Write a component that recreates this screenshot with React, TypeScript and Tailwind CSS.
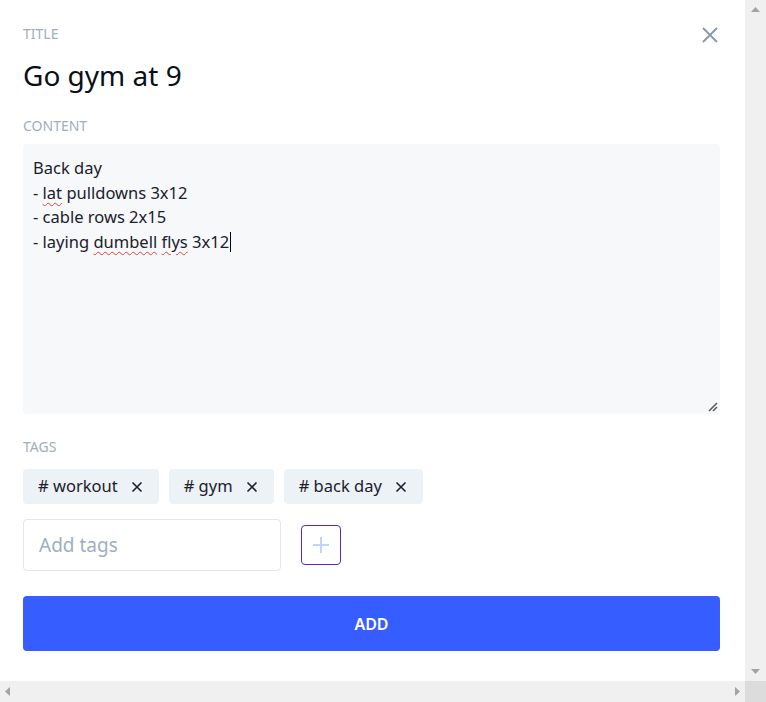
import React from "react";

const font = { fontFamily: '"Noto Sans", "Open Sans", sans-serif' };

function Chip({ label }: { label: string }) {
  return (
    <div className="flex h-[35px] items-center gap-[13px] rounded-[4px] bg-[#edf2f7] pl-[15px] pr-[16px] text-[16.5px] text-[#1a202c]">
      <span>{label}</span>
      <svg width="12" height="12" viewBox="0 0 12 12">
        <path d="M1.5 1.5 L10.5 10.5 M10.5 1.5 L1.5 10.5" stroke="#1a202c" strokeWidth="1.6" />
      </svg>
    </div>
  );
}

const squiggle = "underline decoration-wavy decoration-[#e53e3e] decoration-1 underline-offset-[3px]";

export default function App() {
  return (
    <div className="flex h-[702px] w-[766px] flex-col overflow-hidden bg-white" style={font}>
      <div className="flex min-h-0 flex-1">
        <div className="relative flex w-[745px] flex-col px-[23px] pt-[26px]">
          <button className="absolute right-[27px] top-[27px]">
            <svg width="16" height="16" viewBox="0 0 16 16">
              <path d="M1 1 L15 15 M15 1 L1 15" stroke="#8795b0" strokeWidth="1.8" />
            </svg>
          </button>
          <div className="text-[14px] leading-[16px] text-[#a0aec0]">TITLE</div>
          <div className="mt-[15px] text-[28px] leading-[36px] text-[#0b0f19]">Go gym at 9</div>
          <div className="mt-[25px] text-[14px] leading-[16px] text-[#a0aec0]">CONTENT</div>
          <div className="relative mt-[10px] h-[270px] w-[697px] rounded-[4px] bg-[#f7f8fa] px-[10px] pt-[12px] text-[16.5px] leading-[24.5px] text-[#1a202c]">
            <div>Back day</div>
            <div>
              - <span className={squiggle}>lat</span> pulldowns 3x12
            </div>
            <div>- cable rows 2x15</div>
            <div className="flex items-center">
              <span>
                - laying <span className={squiggle}>dumbell</span> <span className={squiggle}>flys</span> 3x12
              </span>
              <span className="ml-[1px] inline-block h-[20px] w-[1px] bg-black" />
            </div>
            <svg className="absolute bottom-[2px] right-[2px]" width="10" height="10" viewBox="0 0 10 10">
              <path d="M1 9 L9 1 M5 9 L9 5" stroke="#555" strokeWidth="1.5" />
            </svg>
          </div>
          <div className="mt-[25px] text-[14px] leading-[16px] text-[#a0aec0]">TAGS</div>
          <div className="mt-[14px] flex gap-[10px]">
            <Chip label="# workout" />
            <Chip label="# gym" />
            <Chip label="# back day" />
          </div>
          <div className="mt-[15px] flex items-center gap-[20px]">
            <div className="flex h-[52px] w-[258px] items-center rounded-[4px] border border-[#e2e8f0] px-[15px] text-[19px] text-[#a0aec0]">
              Add tags
            </div>
            <div className="flex h-[40px] w-[40px] items-center justify-center rounded-[4px] border border-[#5a21e0]">
              <svg width="18" height="18" viewBox="0 0 18 18">
                <path d="M9 1 V17 M1 9 H17" stroke="#bcd6ff" strokeWidth="2" />
              </svg>
            </div>
          </div>
          <button className="mt-[25px] flex h-[55px] w-[697px] items-center justify-center rounded-[4px] bg-[#365dff] text-[16px] font-semibold text-white">
            ADD
          </button>
        </div>
        <div className="flex w-[21px] flex-col items-center justify-between bg-[#f0f0f0] py-[7px]">
          <svg width="9" height="5" viewBox="0 0 9 5"><path d="M0 5 L4.5 0 L9 5 Z" fill="#a3a3a3" /></svg>
          <svg width="9" height="5" viewBox="0 0 9 5"><path d="M0 0 L4.5 5 L9 0 Z" fill="#a3a3a3" /></svg>
        </div>
      </div>
      <div className="flex h-[21px] bg-[#f0f0f0]">
        <div className="flex flex-1 items-center justify-between px-[5px]">
          <svg width="5" height="9" viewBox="0 0 5 9"><path d="M5 0 L0 4.5 L5 9 Z" fill="#a3a3a3" /></svg>
          <svg width="5" height="9" viewBox="0 0 5 9"><path d="M0 0 L5 4.5 L0 9 Z" fill="#a3a3a3" /></svg>
        </div>
        <div className="w-[21px] bg-[#dcdcdc]" />
      </div>
    </div>
  );
}
